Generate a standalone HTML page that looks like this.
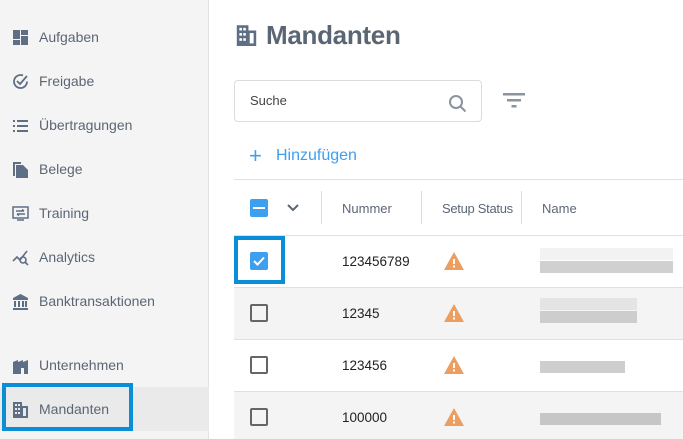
<!DOCTYPE html>
<html><head><meta charset="utf-8"><style>
*{margin:0;padding:0;box-sizing:border-box}
body{width:683px;height:439px;overflow:hidden;background:#fff;font-family:"Liberation Sans",sans-serif;position:relative}
.side{position:absolute;left:0;top:0;width:209px;height:439px;background:#f4f4f4;border-right:1px solid #e2e2e2}
.it{position:absolute;left:39px;font-size:14px;color:#5b6675;line-height:16px}
.ic{position:absolute;left:12px;width:17px;height:17px}
.sel{position:absolute;left:0;top:387px;width:209px;height:44px;background:#eaeaea}
.selb{position:absolute;left:2px;top:383px;width:131px;height:48px;border:4px solid #0a8fd6}
.abs{position:absolute}
.t{position:absolute;font-size:13.5px;color:#222}
.h{position:absolute;font-size:13px;color:#5b6675;top:201px}
.row{position:absolute;left:234px;width:449px;border-top:1px solid #e0e0e0}
.cb{position:absolute;left:250px;width:18px;height:18px;border:2px solid #666;border-radius:2px}
.bar{position:absolute;left:540px;height:12px}
</style></head><body>
<div class="side">
<div class="sel"></div>
<svg class="ic" style="top:29px" viewBox="0 0 17 17" fill="#5e6e85"><rect x="1" y="1" width="7" height="9"/><rect x="9" y="1" width="7" height="5"/><rect x="1" y="11" width="7" height="5"/><rect x="9" y="7" width="7" height="9"/></svg>
<div class="it" style="top:29px">Aufgaben</div>
<svg class="ic" style="top:73px" viewBox="0 0 17 17" fill="none" stroke="#5e6e85" stroke-width="1.8"><path d="M15 8.5A6.5 6.5 0 1 1 11 2.5"/><path d="M5 8l3 3 7-8"/></svg>
<div class="it" style="top:73px">Freigabe</div>
<svg class="ic" style="top:117px" viewBox="0 0 17 17" fill="#5e6e85"><rect x="1" y="3" width="2" height="2"/><rect x="5" y="3" width="11" height="2"/><rect x="1" y="8" width="2" height="2"/><rect x="5" y="8" width="11" height="2"/><rect x="1" y="13" width="2" height="2"/><rect x="5" y="13" width="11" height="2"/></svg>
<div class="it" style="top:117px">Übertragungen</div>
<svg class="ic" style="top:161px" viewBox="0 0 17 17" fill="#5e6e85"><path d="M1 1h8v2H3v12H1z"/><path d="M4 4h7l5 5v8H4z"/></svg>
<div class="it" style="top:161px">Belege</div>
<svg class="ic" style="top:205px" viewBox="0 0 17 17" fill="none" stroke="#5e6e85" stroke-width="1.5"><rect x="1" y="2" width="15" height="11"/><path d="M5 15h7M4 6h8M10 4.5l2 1.5M5 9h8M7 10.5l-2-1.5"/></svg>
<div class="it" style="top:205px">Training</div>
<svg class="ic" style="top:249px" viewBox="0 0 17 17" fill="none" stroke="#5e6e85" stroke-width="1.6"><path d="M1 12l4-4 3 3 7-9"/><circle cx="11" cy="11" r="3"/><path d="M13 13l3 3"/></svg>
<div class="it" style="top:249px">Analytics</div>
<svg class="ic" style="top:293px" viewBox="0 0 17 17" fill="#5e6e85"><path d="M8.5 1L1 5v2h15V5z"/><rect x="2" y="8" width="2" height="6"/><rect x="6" y="8" width="2" height="6"/><rect x="10" y="8" width="2" height="6"/><rect x="13" y="8" width="2" height="6"/><rect x="1" y="15" width="15" height="2"/></svg>
<div class="it" style="top:293px">Banktransaktionen</div>
<svg class="ic" style="top:357px" viewBox="0 0 17 17" fill="#5e6e85"><path d="M1 5l5-2v2l5-2v2l5-2v14H1z"/><rect x="9" y="11" width="3" height="6" fill="#f4f4f4"/></svg>
<div class="it" style="top:357px">Unternehmen</div>
<svg class="ic" style="top:401px" viewBox="0 0 17 17" fill="#5e6e85"><path d="M1 1h9v4h6v12H1z"/><g fill="#eaeaea"><rect x="3" y="3" width="2" height="2"/><rect x="6" y="3" width="2" height="2"/><rect x="3" y="7" width="2" height="2"/><rect x="6" y="7" width="2" height="2"/><rect x="3" y="11" width="2" height="2"/><rect x="6" y="11" width="2" height="2"/><rect x="11" y="7" width="3" height="8"/></g></svg>
<div class="it" style="top:401px">Mandanten</div>
<div class="selb"></div>
</div>

<svg class="abs" style="left:234px;top:24px" width="25" height="22" viewBox="0 0 17 17" fill="#5e6e85"><path d="M1 1h9v4h6v12H1z"/><g fill="#fff"><rect x="3" y="3" width="2" height="2"/><rect x="6" y="3" width="2" height="2"/><rect x="3" y="7" width="2" height="2"/><rect x="6" y="7" width="2" height="2"/><rect x="3" y="11" width="2" height="2"/><rect x="6" y="11" width="2" height="2"/><rect x="11" y="7" width="3" height="8"/></g></svg>
<div class="abs" style="left:266px;top:20px;font-size:26px;font-weight:bold;color:#5b6675;letter-spacing:-0.3px">Mandanten</div>

<div class="abs" style="left:234px;top:80px;width:248px;height:42px;border:1px solid #dcdcdc;border-radius:4px"></div>
<div class="abs" style="left:250px;top:93px;font-size:13px;color:#444">Suche</div>
<svg class="abs" style="left:448px;top:94px" width="20" height="20" viewBox="0 0 20 20" fill="none" stroke="#8a93a0" stroke-width="2"><circle cx="8" cy="8" r="6"/><path d="M12.5 12.5l5 5"/></svg>
<svg class="abs" style="left:503px;top:93px" width="22" height="16" viewBox="0 0 22 16" fill="#8a93a0"><rect x="0" y="0" width="22" height="2.5"/><rect x="4" y="6" width="14" height="2.5"/><rect x="8.5" y="12" width="5" height="2.5"/></svg>

<div class="abs" style="left:249px;top:145px;font-size:22px;color:#3d9ff0;line-height:22px">+</div>
<div class="abs" style="left:276px;top:147px;font-size:16px;color:#3d9ff0">Hinzufügen</div>

<div class="row" style="top:179px;height:57px"></div>
<div class="abs" style="left:250px;top:199px;width:18px;height:18px;background:#3d9ff0;border-radius:2px"><div style="position:absolute;left:3px;top:8px;width:12px;height:2px;background:#fff"></div></div>
<svg class="abs" style="left:286px;top:203px" width="14" height="10" viewBox="0 0 14 10" fill="none" stroke="#5b6675" stroke-width="2"><path d="M2 2l5 5 5-5"/></svg>
<div class="abs" style="left:321px;top:191px;width:1px;height:33px;background:#dcdcdc"></div>
<div class="abs" style="left:421px;top:191px;width:1px;height:33px;background:#dcdcdc"></div>
<div class="abs" style="left:521px;top:191px;width:1px;height:33px;background:#dcdcdc"></div>
<div class="h" style="left:342px">Nummer</div>
<div class="h" style="left:442px;letter-spacing:-0.3px">Setup Status</div>
<div class="h" style="left:542px">Name</div>

<div class="row" style="top:235px;height:53px;background:#fff"></div>
<div class="row" style="top:287px;height:53px;background:#f4f4f4"></div>
<div class="row" style="top:339px;height:53px;background:#fff"></div>
<div class="row" style="top:391px;height:48px;background:#f4f4f4"></div>

<div class="abs" style="left:234px;top:236px;width:51px;height:48px;border:4px solid #0a8fd6;background:#fff"></div>
<div class="abs" style="left:250px;top:252px;width:18px;height:18px;background:#3d9ff0;border-radius:2px"><svg width="18" height="18" viewBox="0 0 18 18" fill="none" stroke="#fff" stroke-width="2"><path d="M4 9l3.5 3.5L14 5.5"/></svg></div>
<div class="cb" style="top:304px"></div>
<div class="cb" style="top:356px"></div>
<div class="cb" style="top:408px"></div>

<div class="t" style="left:342px;top:254px">123456789</div>
<div class="t" style="left:342px;top:306px">12345</div>
<div class="t" style="left:342px;top:358px">123456</div>
<div class="t" style="left:342px;top:410px">100000</div>

<svg class="abs" style="left:443px;top:251px" width="22" height="20" viewBox="0 0 22 20"><path d="M11 1L21 19H1z" fill="#ec9d60"/><rect x="10" y="8" width="2" height="5" fill="#fff"/><rect x="10" y="14.5" width="2" height="2" fill="#fff"/></svg>
<svg class="abs" style="left:443px;top:303px" width="22" height="20" viewBox="0 0 22 20"><path d="M11 1L21 19H1z" fill="#ec9d60"/><rect x="10" y="8" width="2" height="5" fill="#fff"/><rect x="10" y="14.5" width="2" height="2" fill="#fff"/></svg>
<svg class="abs" style="left:443px;top:355px" width="22" height="20" viewBox="0 0 22 20"><path d="M11 1L21 19H1z" fill="#ec9d60"/><rect x="10" y="8" width="2" height="5" fill="#fff"/><rect x="10" y="14.5" width="2" height="2" fill="#fff"/></svg>
<svg class="abs" style="left:443px;top:407px" width="22" height="20" viewBox="0 0 22 20"><path d="M11 1L21 19H1z" fill="#ec9d60"/><rect x="10" y="8" width="2" height="5" fill="#fff"/><rect x="10" y="14.5" width="2" height="2" fill="#fff"/></svg>

<div class="bar" style="top:248px;width:133px;background:#f2f2f2"></div>
<div class="bar" style="top:261px;width:133px;background:#d0d0d0"></div>
<div class="bar" style="top:298px;width:97px;background:#e4e4e4"></div>
<div class="bar" style="top:311px;width:97px;background:#cdcdcd"></div>
<div class="bar" style="top:361px;width:85px;background:#cecece"></div>
<div class="bar" style="top:413px;width:121px;background:#c6c6c6"></div>
</body></html>
